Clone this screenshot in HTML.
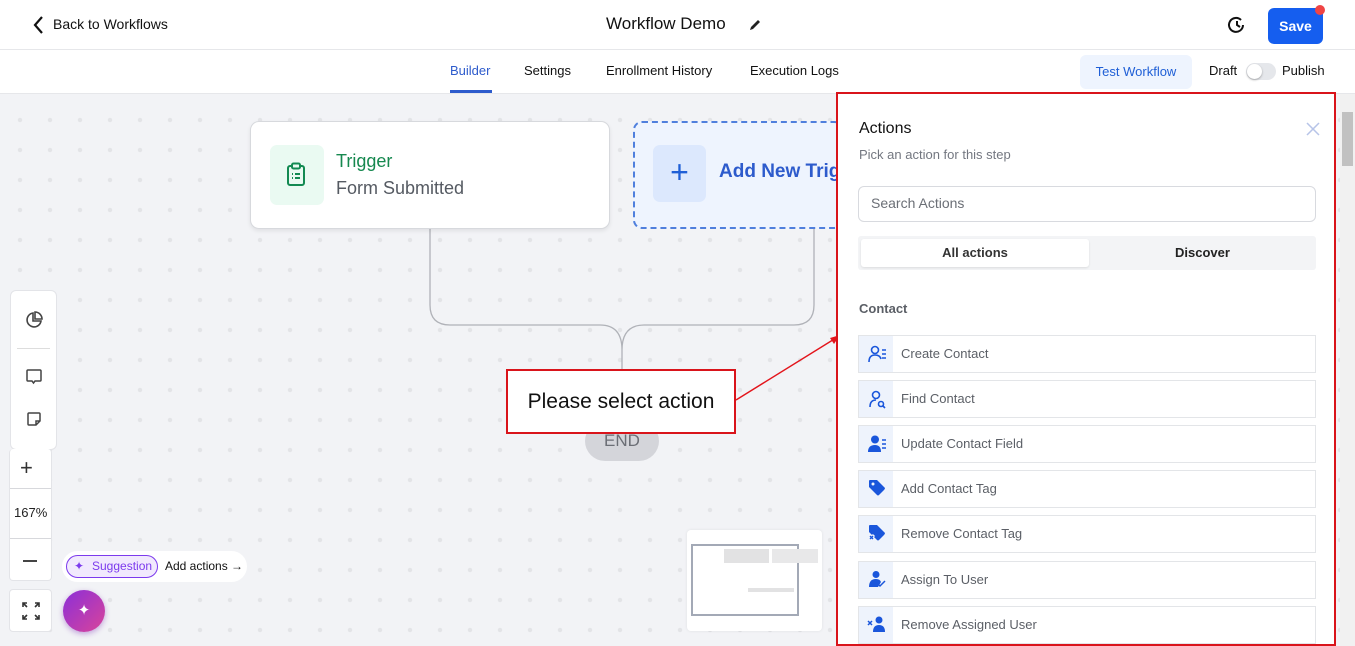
<!DOCTYPE html>
<html><head><meta charset="utf-8"><style>
*{box-sizing:border-box;margin:0;padding:0}
body{width:1355px;height:646px;overflow:hidden;font-family:"Liberation Sans",sans-serif;background:#f2f3f6;position:relative;color:#111}
.top{position:absolute;left:0;top:0;width:1355px;height:50px;background:#fff;border-bottom:1px solid #e6e7ea}
.tabs{position:absolute;left:0;top:50px;width:1355px;height:44px;background:#fff;border-bottom:1px solid #e6e7ea}
.canvas{position:absolute;left:0;top:94px;width:1340px;height:552px;background-color:#f2f3f6;background-image:radial-gradient(circle,#e3e4e7 2px,transparent 2.4px);background-size:30px 30px;background-position:5px 11px}
.abs{position:absolute}
.panel{position:absolute;left:836px;top:92px;width:500px;height:554px;background:#fff;border:2px solid #d9141b}
.item{position:absolute;left:20px;width:458px;height:38px;border:1px solid #e3e5e8;background:#fff}
.item .ic{position:absolute;left:0;top:0;width:34px;height:36px;background:#eef3fc}
.item span{position:absolute;left:42px;top:10px;font-size:13px;color:#5b5f66}
.side{position:absolute;background:#fff;border:1px solid #e3e4e8;border-radius:4px}
</style></head><body>
<div class="top">
 <svg class="abs" style="left:32px;top:15px" width="14" height="20" viewBox="0 0 14 20"><path d="M10 2 L3 10 L10 18" stroke="#111" stroke-width="2.2" fill="none"/></svg>
 <div class="abs" style="left:53px;top:16px;font-size:14px">Back to Workflows</div>
 <div class="abs" style="left:606px;top:14px;font-size:17px">Workflow Demo</div>
 <svg class="abs" style="left:748px;top:18px" width="14" height="14" viewBox="0 0 14 14"><path d="M2 12 L3 9 L10 2 L12 4 L5 11 Z" fill="#222"/></svg>
 <svg class="abs" style="left:1227px;top:15px" width="20" height="20" viewBox="0 0 20 20"><path d="M16 10 A7 7 0 1 1 14 5" stroke="#111" stroke-width="2" fill="none"/><path d="M10 6 V10 L13 12" stroke="#111" stroke-width="2" fill="none"/></svg>
 <div class="abs" style="left:1268px;top:8px;width:55px;height:36px;background:#155eef;border-radius:6px;color:#fff;font-size:14px;font-weight:bold;text-align:center;line-height:36px">Save</div>
 <div class="abs" style="left:1315px;top:5px;width:10px;height:10px;border-radius:50%;background:#ef4444"></div>
</div>
<div class="tabs">
 <div class="abs" style="left:450px;top:13px;font-size:13px;color:#2d5bcc">Builder</div>
 <div class="abs" style="left:450px;top:40px;width:42px;height:3px;background:#2d5bcc"></div>
 <div class="abs" style="left:524px;top:13px;font-size:13px">Settings</div>
 <div class="abs" style="left:606px;top:13px;font-size:13px">Enrollment History</div>
 <div class="abs" style="left:750px;top:13px;font-size:13px">Execution Logs</div>
 <div class="abs" style="left:1080px;top:5px;width:112px;height:34px;background:#eef4fe;border-radius:6px;color:#1f5fd6;font-size:13px;text-align:center;line-height:34px">Test Workflow</div>
 <div class="abs" style="left:1209px;top:13px;font-size:13px">Draft</div>
 <div class="abs" style="left:1246px;top:13px;width:30px;height:17px;border-radius:9px;background:#e5e7eb"><div style="position:absolute;left:1px;top:1px;width:15px;height:15px;border-radius:50%;background:#fff;box-shadow:0 1px 2px rgba(0,0,0,.3)"></div></div>
 <div class="abs" style="left:1282px;top:13px;font-size:13px">Publish</div>
</div>
<div class="canvas"></div>
<div class="abs" style="left:1340px;top:94px;width:15px;height:552px;background:#f1f1f1"></div>
<div class="abs" style="left:1342px;top:112px;width:11px;height:54px;background:#c1c1c1"></div>
<svg class="abs" style="left:420px;top:220px" width="410" height="160" viewBox="0 0 410 160"><path d="M10 0 V85 Q10 105 30 105 H180 Q202 105 202 130 V155 M202 130 Q202 105 224 105 H374 Q394 105 394 85 V0" stroke="#b0b2b8" stroke-width="1.3" fill="none"/></svg>
<div class="abs" style="left:250px;top:121px;width:360px;height:108px;background:#fff;border:1px solid #d7d9dd;border-radius:9px;box-shadow:0 2px 4px rgba(0,0,0,.08)">
 <div class="abs" style="left:19px;top:23px;width:54px;height:60px;background:#eafaf2;border-radius:7px"></div>
 <svg class="abs" style="left:34px;top:40px" width="24" height="26" viewBox="0 0 24 26"><rect x="3" y="4" width="16" height="19" rx="2" stroke="#138a52" stroke-width="2" fill="none"/><rect x="7" y="1.5" width="8" height="5" rx="1.5" stroke="#138a52" stroke-width="2" fill="#eafaf2"/><path d="M7 12h1M10 12h5M7 16h1M10 16h5" stroke="#138a52" stroke-width="2"/></svg>
 <div class="abs" style="left:85px;top:29px;font-size:18px;color:#16884f">Trigger</div>
 <div class="abs" style="left:85px;top:56px;font-size:18px;color:#555a62">Form Submitted</div>
</div>
<div class="abs" style="left:633px;top:121px;width:210px;height:108px;background:#eef4fe;border:2px dashed #4f7fdd;border-radius:9px;border-right:none"></div>
<div class="abs" style="left:653px;top:145px;width:53px;height:57px;background:#dce8fd;border-radius:7px;color:#1f5fd6;font-size:32px;text-align:center;line-height:55px">+</div>
<div class="abs" style="left:719px;top:161px;font-size:19px;font-weight:bold;color:#2d5bcc;width:117px;overflow:hidden;white-space:nowrap">Add New Trigger</div>
<div class="abs" style="left:585px;top:421px;width:74px;height:40px;border-radius:20px;background:#d4d5da;color:#6b6e75;font-size:17px;text-align:center;line-height:40px">END</div>
<div class="abs" style="left:506px;top:369px;width:230px;height:65px;background:#fff;border:2px solid #d9141b;font-size:21px;text-align:center;line-height:61px">Please select action</div>
<svg class="abs" style="left:734px;top:330px" width="110" height="75" viewBox="0 0 110 75"><path d="M2 70 L102 8" stroke="#e3141b" stroke-width="1.4"/><path d="M106 5 L96 8 L100 14 Z" fill="#e3141b"/></svg>
<div class="side" style="left:10px;top:290px;width:47px;height:160px;border-radius:6px">
 <svg class="abs" style="left:13px;top:19px" width="20" height="20" viewBox="0 0 20 20"><path d="M9 3 A7 7 0 1 0 17 11 H9 Z" stroke="#444" stroke-width="1.6" fill="none"/><path d="M11 2 A7 7 0 0 1 18 9 H11 Z" stroke="#444" stroke-width="1.6" fill="none"/></svg>
 <div class="abs" style="left:6px;top:57px;width:33px;height:1px;background:#ddd"></div>
 <svg class="abs" style="left:14px;top:77px" width="18" height="18" viewBox="0 0 18 18"><path d="M2 3 Q2 2 3 2 H15 Q16 2 16 3 V12 Q16 13 15 13 H10 L8.5 15 L7 13 H3 Q2 13 2 12 Z" stroke="#444" stroke-width="1.5" fill="none"/></svg>
 <svg class="abs" style="left:15px;top:120px" width="16" height="16" viewBox="0 0 16 16"><path d="M3 2 H13 Q14 2 14 3 V10 L10 14 H3 Q2 14 2 13 V3 Q2 2 3 2 Z M10 14 V10 H14" stroke="#444" stroke-width="1.5" fill="none"/></svg>
</div>
<div class="side" style="left:9px;top:449px;width:43px;height:132px;border-top:none"></div>
<div class="abs" style="left:20px;top:455px;font-size:22px;color:#333">+</div>
<div class="abs" style="left:10px;top:488px;width:41px;height:1px;background:#d7d8dc"></div>
<div class="abs" style="left:14px;top:505px;font-size:13px;color:#222">167%</div>
<div class="abs" style="left:10px;top:538px;width:41px;height:1px;background:#d7d8dc"></div>
<div class="abs" style="left:23px;top:560px;width:14px;height:2px;background:#444"></div>
<div class="side" style="left:9px;top:589px;width:43px;height:43px">
 <svg class="abs" style="left:12px;top:12px" width="18" height="18" viewBox="0 0 18 18" fill="none" stroke="#333" stroke-width="1.6"><path d="M1 5V1h4M1 1l4 4M17 5V1h-4M17 1l-4 4M1 13v4h4M1 17l4-4M17 13v4h-4M17 17l-4-4"/></svg>
</div>
<div class="abs" style="left:62px;top:551px;width:185px;height:31px;background:#fff;border-radius:16px"></div>
<div class="abs" style="left:66px;top:555px;width:92px;height:23px;border:1px solid #7c3aed;border-radius:12px;background:#f1e9fd;color:#7c3aed;font-size:12px;line-height:21px;padding-left:25px">Suggestion</div>
<div class="abs" style="left:74px;top:559px;color:#7c3aed;font-size:12px">✦</div>
<div class="abs" style="left:165px;top:559px;font-size:12px">Add actions →</div>
<div class="abs" style="left:63px;top:590px;width:42px;height:42px;border-radius:50%;background:linear-gradient(135deg,#8b2fd8,#d9449a);box-shadow:0 2px 6px rgba(120,40,180,.4);color:#fff;text-align:center;line-height:42px;font-size:15px">✦</div>
<div class="abs" style="left:687px;top:530px;width:135px;height:101px;background:#fff;border-radius:4px;box-shadow:0 0 3px rgba(0,0,0,.08)">
 <div class="abs" style="left:4px;top:14px;width:108px;height:72px;border:2px solid #a3a9b6"></div>
 <div class="abs" style="left:37px;top:19px;width:45px;height:14px;background:#e2e2e3"></div>
 <div class="abs" style="left:85px;top:19px;width:46px;height:14px;background:#e8e8e9"></div>
 <div class="abs" style="left:61px;top:58px;width:46px;height:4px;background:#e2e2e3"></div>
</div>
<div class="panel">
 <div class="abs" style="left:21px;top:26px;font-size:16px">Actions</div>
 <div class="abs" style="left:21px;top:53px;font-size:13px;color:#737780">Pick an action for this step</div>
 <svg class="abs" style="left:468px;top:28px" width="14" height="14" viewBox="0 0 14 14"><path d="M1 1 L13 13 M13 1 L1 13" stroke="#b7c4e8" stroke-width="1.5"/></svg>
 <div class="abs" style="left:20px;top:92px;width:458px;height:36px;border:1px solid #d8dadf;border-radius:6px;font-size:14px;color:#6b6f76;padding:8px 12px">Search Actions</div>
 <div class="abs" style="left:20px;top:142px;width:458px;height:34px;background:#f3f4f6;border-radius:3px"></div>
 <div class="abs" style="left:23px;top:145px;width:228px;height:28px;background:#fff;border-radius:3px;box-shadow:0 1px 2px rgba(0,0,0,.1);font-size:13px;font-weight:bold;text-align:center;line-height:28px;color:#333">All actions</div>
 <div class="abs" style="left:251px;top:145px;width:227px;height:28px;font-size:13px;font-weight:bold;text-align:center;line-height:28px;color:#222">Discover</div>
 <div class="abs" style="left:21px;top:207px;font-size:13px;font-weight:bold;color:#5b5f66">Contact</div>
 <div class="item" style="top:241px"><div class="ic"><svg style="margin:8px 0 0 9px" width="20" height="20" viewBox="0 0 20 20" fill="none" stroke="#1a56db" stroke-width="1.6"><circle cx="7" cy="6" r="3.5"/><path d="M1 18 Q1 11 7 11 Q12 11 13 15"/><path d="M14 6h4M14 10h4M14 14h4"/></svg></div><span>Create Contact</span></div>
 <div class="item" style="top:286px"><div class="ic"><svg style="margin:8px 0 0 9px" width="20" height="20" viewBox="0 0 20 20" fill="none" stroke="#1a56db" stroke-width="1.6"><circle cx="8" cy="6" r="3.5"/><path d="M2 18 Q2 11 8 11"/><circle cx="13" cy="15" r="2.5"/><path d="M15 17l2 2"/></svg></div><span>Find Contact</span></div>
 <div class="item" style="top:331px"><div class="ic"><svg style="margin:8px 0 0 9px" width="20" height="20" viewBox="0 0 20 20" fill="#1a56db"><circle cx="7" cy="5.5" r="4"/><path d="M0 18 Q0 11 7 11 Q13 11 13 18Z"/><path d="M14 6h4M14 10h4M14 14h4" stroke="#1a56db" stroke-width="1.6"/></svg></div><span>Update Contact Field</span></div>
 <div class="item" style="top:376px"><div class="ic"><svg style="margin:8px 0 0 9px" width="18" height="18" viewBox="0 0 18 18" fill="#1a56db"><path d="M1 2 Q1 1 2 1 H9 L17 9 Q17 10 16 11 L11 16 Q10 17 9 16 L1 8Z"/><circle cx="5" cy="5" r="1.5" fill="#eef3fc"/></svg></div><span>Add Contact Tag</span></div>
 <div class="item" style="top:421px"><div class="ic"><svg style="margin:8px 0 0 9px" width="18" height="18" viewBox="0 0 18 18" fill="#1a56db"><path d="M1 2 Q1 1 2 1 H9 L17 9 Q17 10 16 11 L11 16 Q10 17 9 16 L1 8Z"/><path d="M1 11l5 5M6 11l-5 5" stroke="#eef3fc" stroke-width="3"/><path d="M2 12l3 3M5 12l-3 3" stroke="#1a56db" stroke-width="1.4"/></svg></div><span>Remove Contact Tag</span></div>
 <div class="item" style="top:467px"><div class="ic"><svg style="margin:8px 0 0 9px" width="18" height="18" viewBox="0 0 18 18" fill="#1a56db"><circle cx="8" cy="4.5" r="3.5"/><path d="M1 17 Q1 9 8 9 Q12 9 13 12 L10 17Z"/><path d="M10 14l2 2 5-5" stroke="#1a56db" stroke-width="1.5" fill="none"/></svg></div><span>Assign To User</span></div>
 <div class="item" style="top:512px"><div class="ic"><svg style="margin:8px 0 0 8px" width="20" height="18" viewBox="0 0 20 18" fill="#1a56db"><circle cx="12" cy="5" r="3.5"/><path d="M6 17 Q6 10 12 10 Q18 10 18 17Z"/><path d="M1 6l4 4M5 6l-4 4" stroke="#1a56db" stroke-width="1.5"/></svg></div><span>Remove Assigned User</span></div>
</div>
</body></html>
